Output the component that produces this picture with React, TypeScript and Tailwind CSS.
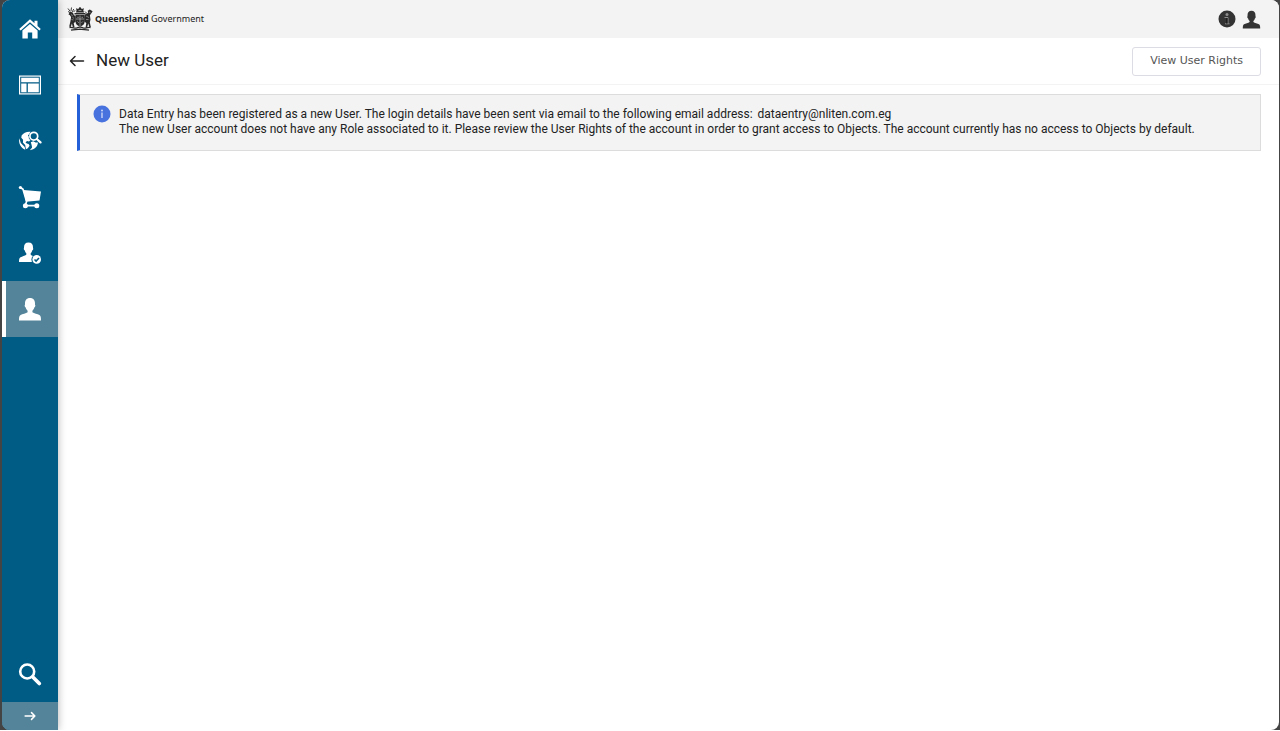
import type { ReactNode } from "react";
import clsx from "clsx";

interface IconProps {
  className?: string;
}

function HomeIcon() {
  return (
    <svg viewBox="0 0 24 24" className="size-6" fill="currentColor" aria-hidden="true">
      <path d="M12 2.2 1.2 12l1.5 1.6L12 5.3l9.3 8.3 1.5-1.6-3.3-3V3.8h-3v2.5z" />
      <path d="M12 6.9 4.4 13.6V21.5h5.4v-6h4.4v6h5.4v-7.9z" />
    </svg>
  );
}

function DashboardIcon() {
  return (
    <svg viewBox="0 0 24 24" className="size-6" aria-hidden="true">
      <rect x="1" y="2.5" width="22" height="19" fill="currentColor" />
      <rect x="2.7" y="4.2" width="18.6" height="15.6" fill="none" stroke="#005b85" strokeWidth="1" />
      <path d="M3 9.8h18M9.2 10v9.500" stroke="#005b85" strokeWidth="1.3" fill="none" />
    </svg>
  );
}

function GlobeSearchIcon() {
  return (
    <svg viewBox="0 0 24 24" className="size-6" aria-hidden="true">
      <path
        d="M3.6 6.6C5.5 3.800 8.600 2.300 12.600 2.700c-.8.7-1.200 1.600-1.300 2.700l-1.500.6.9 1.400.2 2.200 1.500 1.600-1.400 1.300-1.900-.5-1.600 1.300 1.300 1.200 1.800.5 1 1.800-1.600 2.200-1.300.9-.9-.2-.6-3.800-2.300-2.400.2-2.700-1.800-2z"
        fill="currentColor"
      />
      <path d="M1.300 9.200c-1 5.300 1.600 9.800 6 11.600l-.6-2.800-3.900-4z" fill="currentColor" />
      <path d="M12.800 13.200l2.400-1 2.400 1.200 2.400.2c-.3 3.600-3.200 7.200-8.200 7.700l2.300-2.800-.5-2.600z" fill="currentColor" />
      <circle cx="15.800" cy="7.200" r="3.900" fill="none" stroke="currentColor" strokeWidth="1.700" />
      <path d="m18.800 10 3.700 3.400" stroke="currentColor" strokeWidth="2.200" strokeLinecap="round" />
    </svg>
  );
}

function CartIcon() {
  return (
    <svg viewBox="0 0 24 24" className="size-6" aria-hidden="true">
      <path d="M5.500 5 23 6.600l-1.500 9-13.600 1.200z" fill="currentColor" />
      <path
        d="M2.500 2.500 5 4.200l3.600 12.300-1.400 4.200h12"
        fill="none"
        stroke="currentColor"
        strokeWidth="1.700"
        strokeLinejoin="round"
      />
      <circle cx="2.400" cy="2.500" r="1.600" fill="currentColor" />
      <circle cx="7.400" cy="20.700" r="2.500" fill="currentColor" />
      <circle cx="18.800" cy="20.700" r="2.500" fill="currentColor" />
    </svg>
  );
}

function PersonIcon({ className }: IconProps) {
  return (
    <svg viewBox="0 0 24 24" className={className} fill="currentColor" aria-hidden="true">
      <path d="M12 1c3.300 0 5 2.200 5 5.300 0 1-.1 1.500.2 1.800.4.500 0 2-.9 2.500-.3 1.400-1 2.500-1.900 3.200v1.400c1.600 1.300 5.200 1.700 7 2.900 1.300.8 1.600 2.300 1.600 5.400H1c0-3.100.3-4.600 1.600-5.400 1.800-1.200 5.400-1.600 7-2.900v-1.400c-.9-.7-1.600-1.800-1.900-3.200-.9-.5-1.300-2-.9-2.500.3-.3.200-.8.200-1.800C7 3.200 8.700 1 12 1z" />
    </svg>
  );
}

function UserCheckIcon() {
  return (
    <svg viewBox="0 0 24 24" className="size-6" aria-hidden="true">
      <path
        d="M10.500 1.500c3 0 4.500 1.900 4.500 4.700 0 .9.400 1.500.1 2.200-.2.500-.5.800-.9 1-.3 1.300-.8 2.200-1.500 2.900v1.400c1.200 1.100 3.300 1.500 5.300 2.200V21H1c0-2.700.3-4 1.500-4.700 1.700-1 4.300-1.400 5.800-2.600v-1.400c-.7-.7-1.200-1.600-1.500-2.900-.4-.2-.7-.5-.9-1-.3-.7.1-1.300.1-2.200 0-2.800 1.500-4.700 4.500-4.700z"
        fill="currentColor"
      />
      <circle cx="18.700" cy="18.400" r="5.300" fill="#005b85" />
      <circle cx="18.700" cy="18.400" r="4.300" fill="currentColor" />
      <path d="m16.500 18.500 1.600 1.600 2.900-3.100" fill="none" stroke="#005b85" strokeWidth="1.500" />
    </svg>
  );
}

function SearchIcon() {
  return (
    <svg viewBox="0 0 24 24" className="size-6" fill="none" stroke="currentColor" aria-hidden="true">
      <circle cx="9.200" cy="9.500" r="7" strokeWidth="2.600" />
      <path d="m14.800 15 6.500 6.500" strokeWidth="3.600" strokeLinecap="round" />
    </svg>
  );
}

function ArrowIcon({ className }: IconProps) {
  return (
    <svg
      viewBox="0 0 16 16"
      className={className}
      fill="none"
      stroke="currentColor"
      strokeLinecap="round"
      strokeLinejoin="round"
      aria-hidden="true"
    >
      <path d="M1.500 8h13M10 3.500 14.500 8 10 12.500" />
    </svg>
  );
}

function InfoIcon({ className }: IconProps) {
  return (
    <svg viewBox="0 0 18 18" className={className} aria-hidden="true">
      <circle cx="9" cy="9" r="8.500" fill="currentColor" />
      <circle cx="9" cy="5.500" r=".9" fill="#d5def7" />
      <path d="M9 7.500v5.500" stroke="#d5def7" strokeWidth="1.300" />
    </svg>
  );
}

function InfoDarkIcon() {
  return (
    <svg viewBox="0 0 18 18" className="size-[18px]" aria-hidden="true">
      <circle cx="9" cy="9" r="8.500" fill="#333" />
      <circle cx="9" cy="4.500" r="1.500" fill="#8c8c8c" />
      <path d="M6.500 7.500H10v6M7 13.800h4.500" fill="none" stroke="#8c8c8c" strokeWidth="1" />
      <path d="M8.800 8v5.500" stroke="#1f1f1f" strokeWidth="1.500" />
    </svg>
  );
}

/* Coat of arms: crown, shield, red deer and brolga over a scroll */
function CrestIcon() {
  return (
    <svg viewBox="0 0 26 26" className="size-[26px]" fill="#2a2a2a" aria-hidden="true">
      <path d="M9.500 4.500 9 2.200l2.200.7L13 .8l1.800 2.100 2.200-.7-.7 2.300.8 2H9z" />
      <path d="M7.500 7h11v1.500h-11zM8.500 9h9.200v6.500c0 2.500-1.900 4.200-4.600 5.300-2.700-1.100-4.600-2.800-4.600-5.300z" />
      <path
        d="M8.700 13H17.500M13 9.600v10.600M10.300 11.300h1.500M14.500 11.300H16M10.500 15.500l1.300 1.300M14.500 16.800l1.300-1.300M11.500 4.500h3"
        stroke="#bbb"
        strokeWidth=".7"
      />
      <path
        d="M1 2.500 3 5.200M4.500 1.500 4 5M1 5.500l3 1.500M6.800 3 4.800 6.500M6.500 5.500l1.800-.8M18 5.500l2 2"
        fill="none"
        stroke="#2a2a2a"
        strokeWidth=".9"
      />
      <path d="M3 5.500 6 6.700l.8 2.300 1.900 1.300v5.500l-2 1.200.8 4-1.600.4-1-4-1.200 3.600-1.500-.4 1.200-5 .7-4.500L2.700 9 1.500 8.500z" />
      <path d="m25.600 5.300-2.800-1.800-2.100 1.300.5 2.300-2.700.8-1.200 3v4.500l2 1.700-.7 4.500 1.400.3 1.200-4.500 1.300 4.200 1.300-.5-1-4.800.7-2.500-.6-4.500 1.800-2.500z" />
      <path
        d="M4 8.500 5.800 10M19 10l3 1.500M4.500 13.500l2 .5M19 13.500h2.500M22 6l1.500.8M5.500 11.500l1.500.8"
        stroke="#bbb"
        strokeWidth=".6"
      />
      <path
        d="M2.500 21.500c3.500-.6 5 1.300 7 .5 2-.9 5-.9 7 0s3.500-1.100 7-.5M4 24.200c3-.8 6-.3 9-1 3 .7 6 .2 9 1"
        fill="none"
        stroke="#2a2a2a"
        strokeWidth="1.300"
      />
    </svg>
  );
}

interface NavItem {
  label: string;
  icon: ReactNode;
  active?: boolean;
}

const NAV_ITEMS: NavItem[] = [
  { label: "Home", icon: <HomeIcon /> },
  { label: "Dashboard", icon: <DashboardIcon /> },
  { label: "Explore", icon: <GlobeSearchIcon /> },
  { label: "Cart", icon: <CartIcon /> },
  { label: "Approvals", icon: <UserCheckIcon /> },
  { label: "Users", icon: <PersonIcon className="size-6" />, active: true },
];

function Sidebar() {
  return (
    <aside className="relative z-10 flex w-14 shrink-0 flex-col justify-between bg-[#005b85] text-white shadow-[0_0_8px_rgba(0,0,0,0.3)]">
      <nav aria-label="Main" className="pt-px">
        {NAV_ITEMS.map((item) => (
          <a
            key={item.label}
            href="#"
            aria-label={item.label}
            aria-current={item.active ? "page" : undefined}
            className={clsx(
              "flex h-14 items-center justify-center",
              item.active && "border-l-4 border-white bg-[#548499] pr-1",
            )}
          >
            {item.icon}
          </a>
        ))}
      </nav>
      <div>
        <button type="button" aria-label="Search" className="flex h-14 w-full items-center justify-center">
          <SearchIcon />
        </button>
        <button
          type="button"
          aria-label="Expand menu"
          className="flex h-7 w-full items-center justify-center bg-[#548499]"
        >
          <ArrowIcon className="size-3 stroke-2" />
        </button>
      </div>
    </aside>
  );
}

function TopBar() {
  return (
    <header className="flex h-[38px] items-center justify-between bg-[#f3f3f3] pr-[18px] pl-[9px]">
      <a href="#" className="flex items-center gap-0.5 font-['Noto_Sans',sans-serif] text-[9px] text-[#222]">
        <CrestIcon />
        <span>
          <strong className="font-bold">Queensland</strong> Government
        </span>
      </a>
      <div className="flex items-center gap-1.5 text-[#333]">
        <button type="button" aria-label="Information">
          <InfoDarkIcon />
        </button>
        <button type="button" aria-label="Account">
          <PersonIcon className="size-[19px]" />
        </button>
      </div>
    </header>
  );
}

export default function App() {
  return (
    <div className="flex min-h-screen flex-col bg-white pb-px font-[Roboto,sans-serif] text-[#222]">
      <div className="flex flex-1 bg-[#444] pr-px pl-0.5">
        <div className="flex flex-1 overflow-hidden rounded-lg bg-white">
          <Sidebar />
          <div className="min-w-0 flex-1">
            <TopBar />
            <div className="flex h-[47px] items-center justify-between border-b border-[#f3f3f3] pr-[18px] pl-[11px]">
              <div className="flex items-center gap-[11px]">
                <button type="button" aria-label="Back">
                  <ArrowIcon className="size-4 rotate-180 stroke-[1.5]" />
                </button>
                <h1 className="text-[17px]">New User</h1>
              </div>
              <button
                type="button"
                className="h-[29px] rounded-[3px] border border-[#dcdce4] px-[17px] font-['DejaVu_Sans',sans-serif] text-[11px] text-[#555]"
              >
                View User Rights
              </button>
            </div>
            <main className="pt-[9px] pr-[18px] pl-[19px]">
              <div
                role="status"
                className="flex gap-2 border border-l-[3px] border-[#dcdcdc] border-l-[#2460d8] bg-[#f3f3f3] px-[13px] pt-2.5 pb-[13px]"
              >
                <InfoIcon className="size-[18px] shrink-0 text-[#4872de]" />
                <p className="pt-0.5 text-[12px] leading-[15px]">
                  Data Entry has been registered as a new User. The login details have been sent via email to the
                  following email address:{" "}
                  <a href="mailto:dataentry@nliten.com.eg" className="ml-0.5">
                    dataentry@nliten.com.eg
                  </a>
                  <br />
                  The new User account does not have any Role associated to it. Please review the User Rights of the
                  account in order to grant access to Objects. The account currently has no access to Objects by
                  default.
                </p>
              </div>
            </main>
          </div>
        </div>
      </div>
    </div>
  );
}
